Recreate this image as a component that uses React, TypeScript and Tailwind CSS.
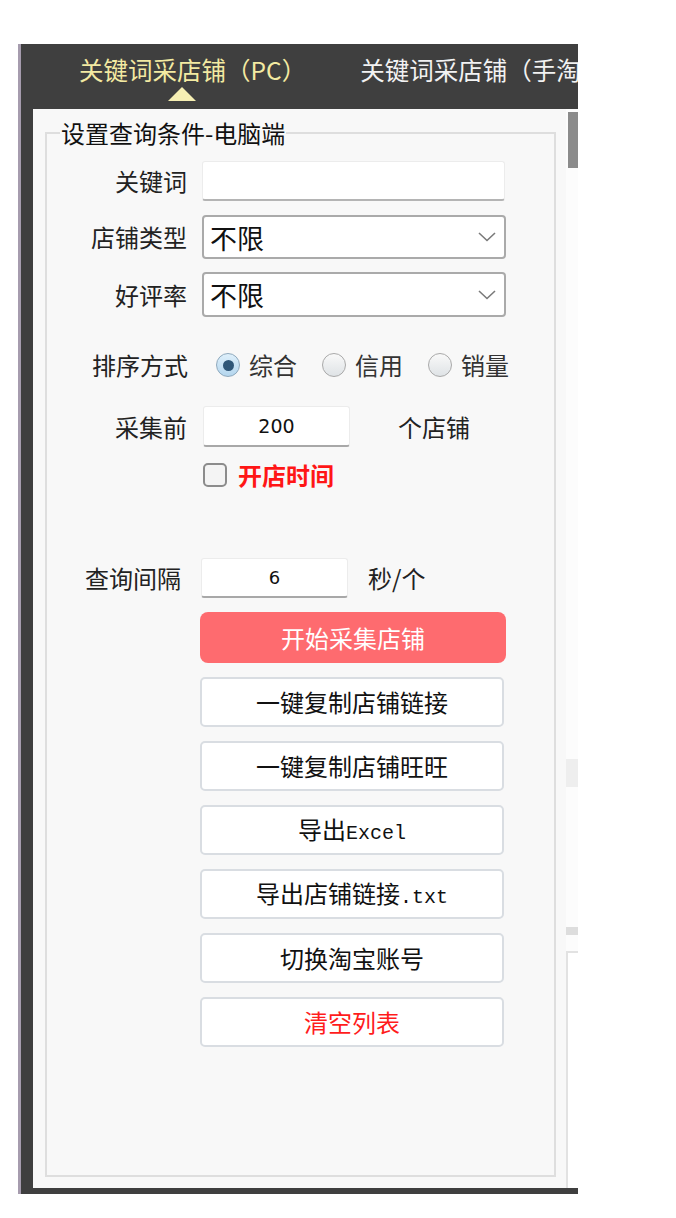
import React from 'react';

const cjk = { fontFamily: '"Noto Sans CJK SC", "Noto Sans", sans-serif' };
const mono = { fontFamily: '"Liberation Mono", monospace' };

const Chevron = () => (
  <svg width="18" height="10" viewBox="0 0 18 10" className="shrink-0">
    <polyline points="1,1 9,8.5 17,1" fill="none" stroke="#7a7a7a" strokeWidth="1.6" />
  </svg>
);

const Select: React.FC<{ value: string; height: string }> = ({ value, height }) => (
  <div className={`ml-[15px] w-[304px] ${height} flex items-center justify-between bg-white border-2 border-[#aaaaaa] rounded-[4px] pl-[6px] pr-[8px]`}>
    <span className="text-[27px] leading-none text-[#111]">{value}</span>
    <Chevron />
  </div>
);

const Radio: React.FC<{ checked?: boolean; label: string; gap: string }> = ({ checked, label, gap }) => (
  <div className={`flex items-center ${gap}`}>
    {checked ? (
      <span className="w-[24px] h-[24px] rounded-full border border-[#8fa9bd] bg-gradient-to-b from-[#dff0fb] to-[#b4d6ee] flex items-center justify-center">
        <span className="w-[11px] h-[11px] rounded-full bg-[#2f5677]" />
      </span>
    ) : (
      <span className="w-[24px] h-[24px] rounded-full border border-[#a9a9a9] bg-gradient-to-b from-[#f9f9f9] to-[#dfe3e6]" />
    )}
    <span className="ml-[9px] text-[24px] leading-none text-[#333]">{label}</span>
  </div>
);

const ActionButton: React.FC<{ children: React.ReactNode; red?: boolean }> = ({ children, red }) => (
  <button
    className={`mt-[14px] ml-[153px] w-[304px] h-[50px] bg-white border-2 border-[#d9dde2] rounded-[5px] text-[24px] leading-none ${
      red ? 'text-[#ff1c1c]' : 'text-[#111]'
    }`}
  >
    {children}
  </button>
);

export default function App() {
  return (
    <div className="w-[676px] h-[1218px] bg-white pt-[44px] pl-[18px]" style={cjk}>
      <div className="w-[560px] h-[1150px] flex flex-col bg-[#3f3f3f] border-l-[3px] border-[#a69cae] overflow-hidden">
        {/* tab bar */}
        <div className="h-[65px] shrink-0 flex items-start pl-[58px] pt-[12px] whitespace-nowrap">
          <div className="flex flex-col items-center">
            <span className="text-[24.5px] leading-[28px] text-[#f3eaa2]">关键词采店铺（PC）</span>
            <svg width="28" height="14" viewBox="0 0 28 14" className="mt-[3px] -ml-[22px]">
              <polygon points="14,0 28,14 0,14" fill="#f6efb3" />
            </svg>
          </div>
          <span className="ml-[54px] text-[24.5px] leading-[28px] text-[#f2f2f2]">关键词采店铺（手淘）</span>
        </div>

        {/* body */}
        <div className="flex-1 flex pl-[12px]">
          <div className="flex-1 bg-[#f8f8f8] pt-[10px] pl-[12px] pr-[10px] pb-[11px] flex">
            <fieldset className="flex-1 border-2 border-[#dedede] flex flex-col">
              <legend className="ml-[13px] px-[1px] text-[24px] leading-[28px] text-[#111]">设置查询条件-电脑端</legend>

              {/* 关键词 */}
              <div className="mt-[14px] h-[40px] flex items-center">
                <span className="w-[140px] text-right text-[24px] text-[#222]">关键词</span>
                <div className="ml-[15px] w-[303px] h-[40px] bg-white border border-[#ececec] border-b-2 border-b-[#b4b4b4] rounded-[3px]" />
              </div>

              {/* 店铺类型 */}
              <div className="mt-[14px] flex items-center">
                <span className="w-[140px] text-right text-[24px] text-[#222]">店铺类型</span>
                <Select value="不限" height="h-[44px]" />
              </div>

              {/* 好评率 */}
              <div className="mt-[13px] flex items-center">
                <span className="w-[140px] text-right text-[24px] text-[#222]">好评率</span>
                <Select value="不限" height="h-[45px]" />
              </div>

              {/* 排序方式 */}
              <div className="mt-[36px] h-[24px] flex items-center">
                <span className="w-[141px] text-right text-[24px] text-[#222]">排序方式</span>
                <Radio checked label="综合" gap="ml-[28px]" />
                <Radio label="信用" gap="ml-[25px]" />
                <Radio label="销量" gap="ml-[25px]" />
              </div>

              {/* 采集前 */}
              <div className="mt-[29px] h-[41px] flex items-center">
                <span className="w-[140px] text-right text-[24px] text-[#222]">采集前</span>
                <div
                  className="ml-[16px] w-[147px] h-[41px] flex items-center justify-center bg-white border border-[#ececec] border-b-2 border-b-[#a8a8a8] rounded-[3px] text-[19px] text-[#111]"
                  style={{ fontFamily: '"DejaVu Sans", sans-serif' }}
                >
                  200
                </div>
                <span className="ml-[48px] text-[24px] text-[#222]">个店铺</span>
              </div>

              {/* 开店时间 */}
              <div className="mt-[16px] h-[24px] flex items-center pl-[156px]">
                <span className="w-[24px] h-[24px] rounded-[5px] border-2 border-[#8c8c8c] bg-[#f4f4f4]" />
                <span className="ml-[11px] text-[24px] font-bold leading-none text-[#ff1616]">开店时间</span>
              </div>

              {/* 查询间隔 */}
              <div className="mt-[71px] h-[40px] flex items-center">
                <span className="w-[134px] text-right text-[24px] text-[#222]">查询间隔</span>
                <div
                  className="ml-[20px] w-[147px] h-[40px] flex items-center justify-center bg-white border border-[#ececec] border-b-2 border-b-[#a8a8a8] rounded-[3px] text-[18px] text-[#111]"
                  style={{ fontFamily: '"DejaVu Sans", sans-serif' }}
                >
                  6
                </div>
                <span className="ml-[20px] text-[24px] text-[#222]">秒/个</span>
              </div>

              {/* buttons */}
              <button className="mt-[14px] ml-[153px] w-[306px] h-[51px] bg-[#fe6b6f] rounded-[8px] text-[24px] leading-none text-white">
                开始采集店铺
              </button>
              <ActionButton>一键复制店铺链接</ActionButton>
              <ActionButton>一键复制店铺旺旺</ActionButton>
              <ActionButton>
                导出<span style={mono} className="text-[20px]">Excel</span>
              </ActionButton>
              <ActionButton>
                导出店铺链接<span style={mono} className="text-[20px]">.txt</span>
              </ActionButton>
              <ActionButton>切换淘宝账号</ActionButton>
              <ActionButton red>清空列表</ActionButton>
            </fieldset>
          </div>

          {/* right sliver: scrollbar + next panel edge */}
          <div className="w-[12px] shrink-0 bg-[#fcfcfc] flex flex-col">
            <div className="mt-[3px] ml-[2px] w-[10px] h-[56px] bg-[#8b8b8b]" />
            <div className="mt-[591px] h-[28px] bg-[#eeeeee]" />
            <div className="mt-[140px] h-[8px] bg-[#dddddd]" />
            <div className="mt-[16px] flex-1 border-l-2 border-t-2 border-[#e2e2e2] bg-white" />
          </div>
        </div>
        <div className="h-[6px] shrink-0" />
      </div>
    </div>
  );
}
